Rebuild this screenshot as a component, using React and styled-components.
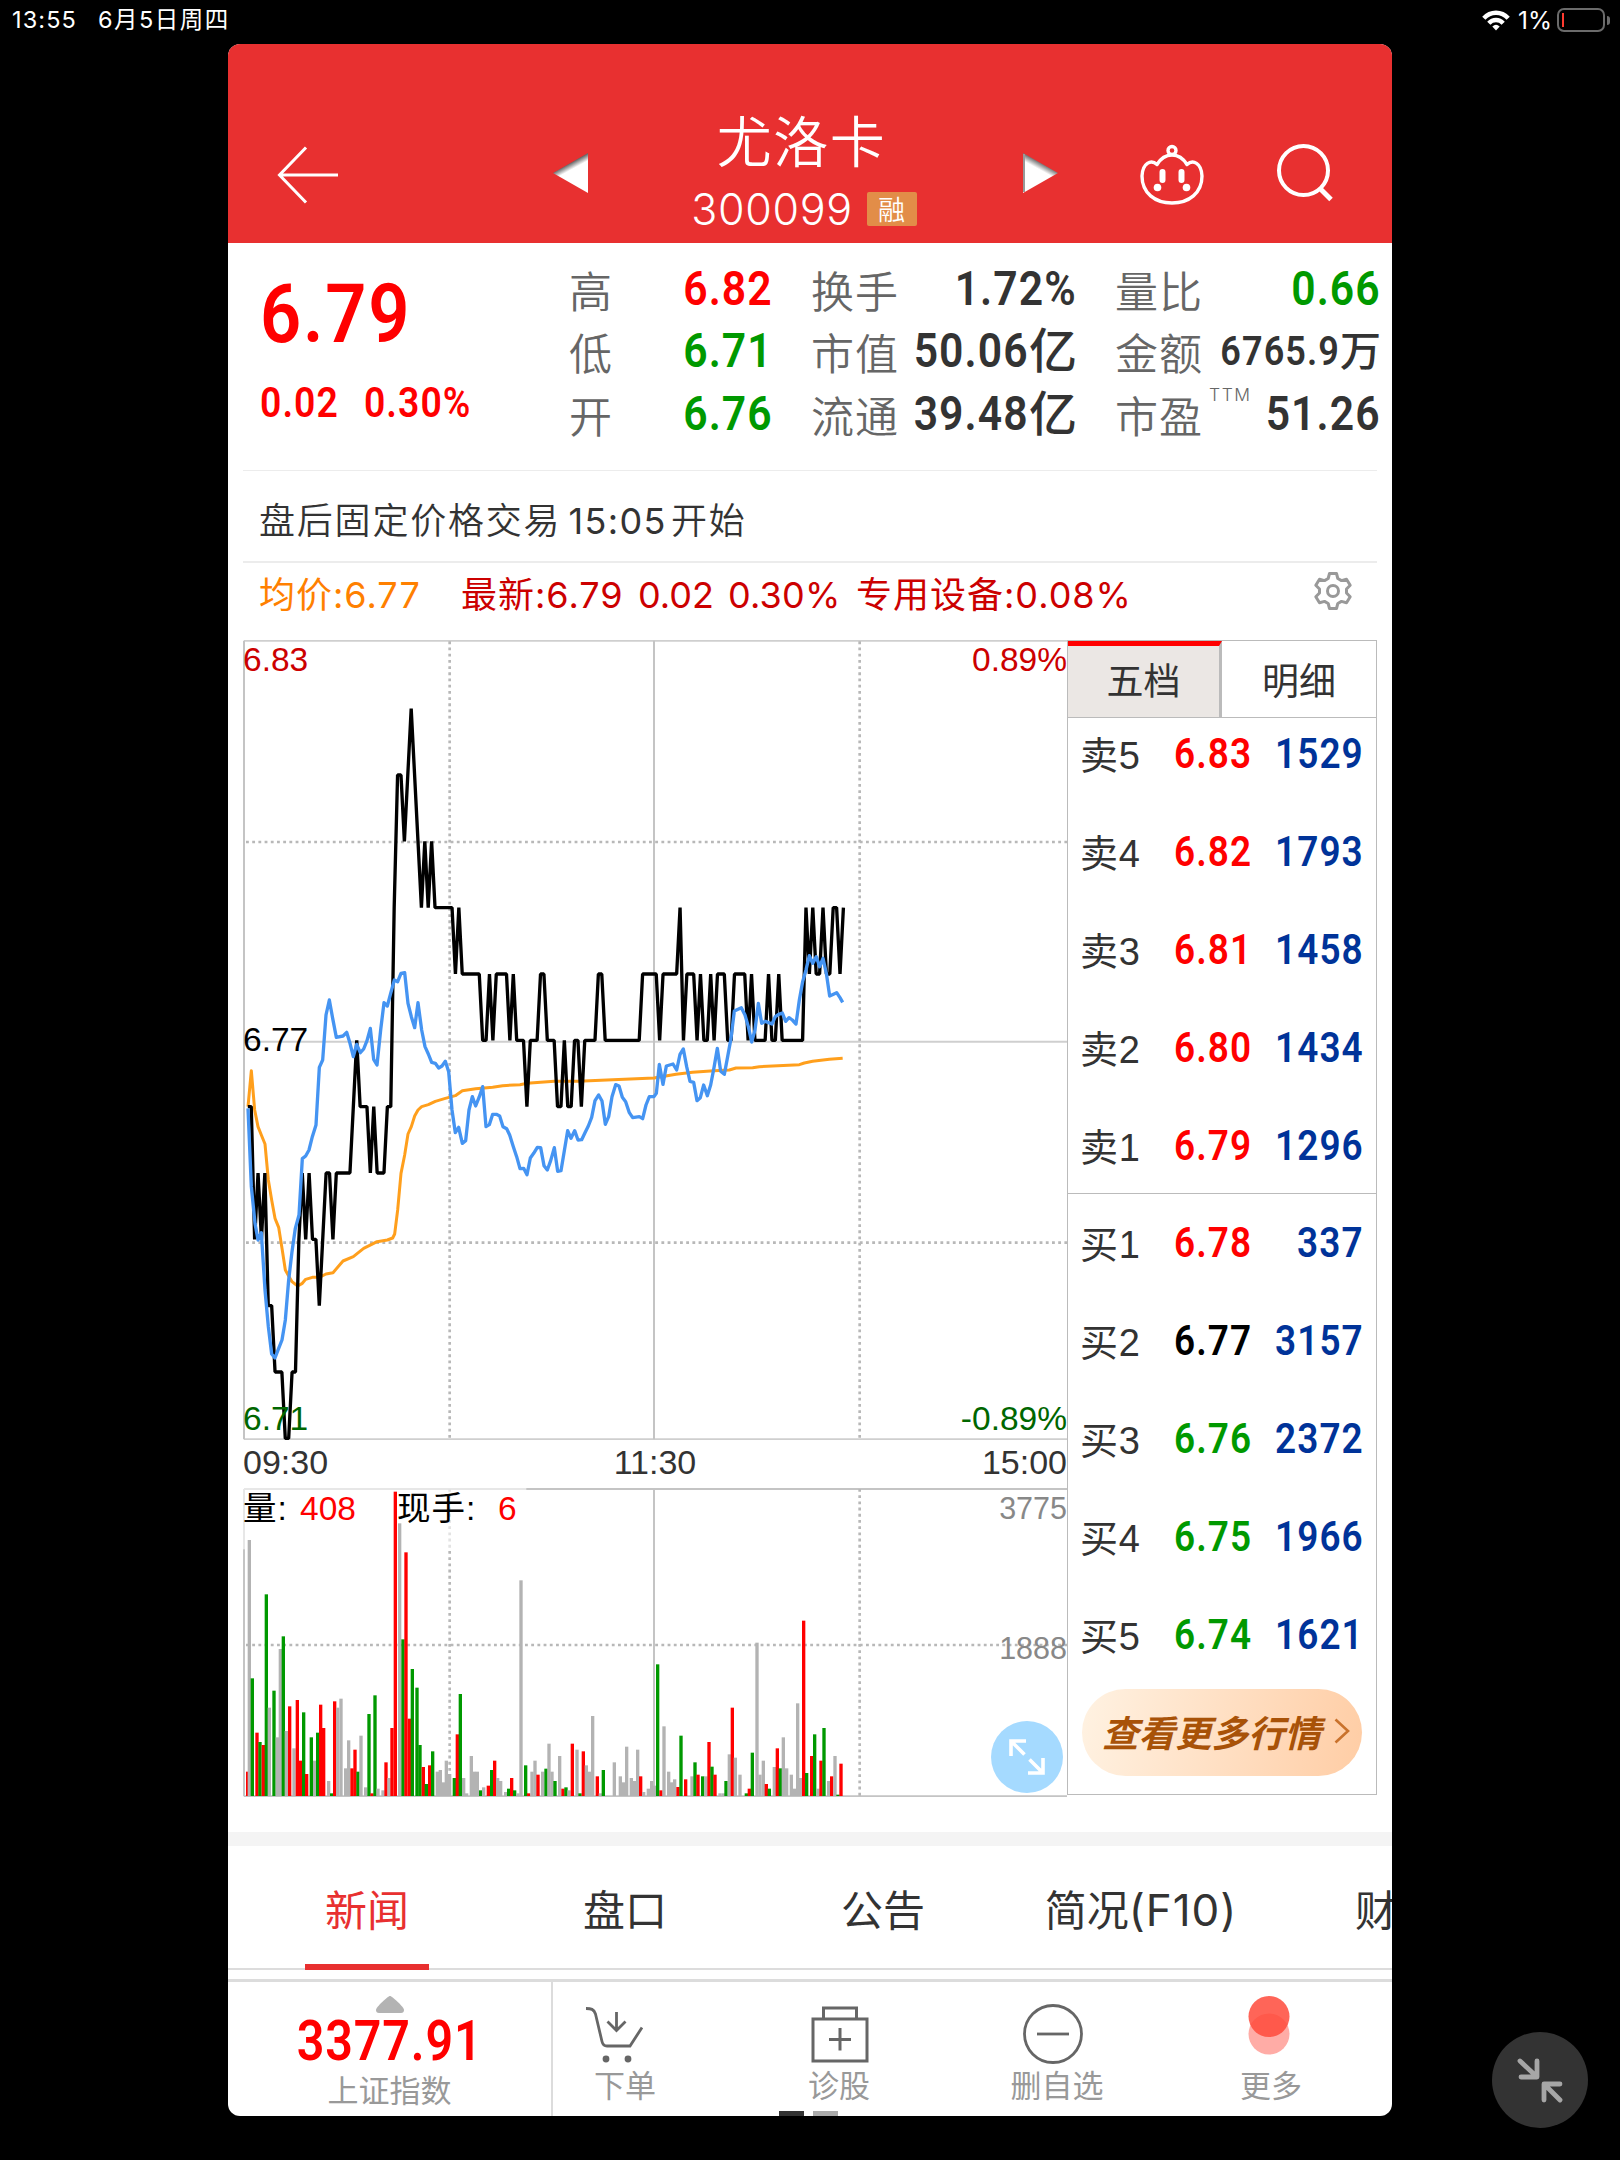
import React from 'react'
import styled, { createGlobalStyle } from 'styled-components';

const quotes = [
    [
        { label: '高', value: '6.82', color: '#ff0000' },
        { label: '低', value: '6.71', color: '#009900' },
        { label: '开', value: '6.76', color: '#009900' },
    ],
    [
        { label: '换手', value: '1.72%' },
        { label: '市值', value: '50.06', unit: '亿' },
        { label: '流通', value: '39.48', unit: '亿' },
    ],
    [
        { label: '量比', value: '0.66', color: '#009900' },
        { label: '金额', value: '6765.9', unit: '万', small: true },
        { label: '市盈', value: '51.26', sup: 'TTM' },
    ],
];

const sells = [
    ['卖5', '6.83', '1529', '#ff0000'],
    ['卖4', '6.82', '1793', '#ff0000'],
    ['卖3', '6.81', '1458', '#ff0000'],
    ['卖2', '6.80', '1434', '#ff0000'],
    ['卖1', '6.79', '1296', '#ff0000'],
];

const buys = [
    ['买1', '6.78', '337', '#ff0000'],
    ['买2', '6.77', '3157', '#000000'],
    ['买3', '6.76', '2372', '#009900'],
    ['买4', '6.75', '1966', '#009900'],
    ['买5', '6.74', '1621', '#009900'],
];

// [minute, cents below the 6.77 close]
const ticks = [
    [0, 1], [1, 1], [2, 3], [3, 2], [4, 3], [5, 2], [6, 4], [7, 4], [8, 5], [10, 5], [11, 6], [12, 6],
    [13, 5], [14, 5], [15, 3], [16, 2], [17, 3], [18, 2], [19, 3], [20, 3], [21, 4], [22, 3], [23, 2],
    [24, 2], [25, 3], [26, 2], [30, 2], [31, 1], [32, 0], [33, 1], [35, 1], [36, 2], [37, 1], [38, 2],
    [40, 2], [41, 1], [42, 1], [43, -2], [44, -4], [45, -4], [46, -3], [47, -4], [48, -5], [49, -4],
    [50, -3], [51, -2], [52, -3], [53, -2], [54, -3], [55, -2], [60, -2], [61, -1], [62, -2], [63, -1],
    [68, -1], [69, 0], [70, 0], [71, -1], [72, 0], [73, -1], [76, -1], [77, 0], [78, -1], [79, 0],
    [81, 0], [82, 1], [83, 0], [85, 0], [86, -1], [87, -1], [88, 0], [90, 0], [91, 1], [92, 1], [93, 0],
    [94, 1], [95, 1], [96, 0], [97, 0], [98, 1], [99, 0], [102, 0], [103, -1], [104, -1], [105, 0],
    [115, 0], [116, -1], [120, -1], [121, 0], [122, -1], [126, -1], [127, -2], [128, 0], [129, -1],
    [131, -1], [132, 0], [133, -1], [134, 0], [135, 0], [136, -1], [137, 0], [138, -1], [140, -1],
    [141, 0], [142, 0], [143, -1], [146, -1], [147, 0], [148, -1], [149, 0], [152, 0], [153, -1],
    [154, 0], [155, 0], [156, -1], [157, 0], [163, 0], [164, -2], [165, -1], [166, -2], [167, -1],
    [168, -1], [169, -2], [170, -1], [171, -1], [172, -2], [173, -2], [174, -1], [175, -2],
];

const indexLine = '36,1435 46,1670 57,1780 66,1830 76,1808 87,1980 97,2090 107,2172 117,2184 128,2155 138,2130 148,2070 158,1950 168,1865 178,1795 189,1755 199,1586 209,1578 219,1560 229,1520 240,1485 250,1312 260,1290 270,1155 280,1110 290,1165 301,1222 321,1218 332,1207 342,1240 352,1280 362,1243 373,1268 383,1257 393,1232 403,1195 413,1288 423,1305 434,1200 444,1118 454,1128 464,1090 475,1050 485,1055 495,1030 506,1028 516,1120 526,1160 536,1193 546,1118 557,1200 567,1250 577,1272 587,1297 598,1300 608,1314 618,1308 628,1294 638,1325 648,1440 658,1508 668,1492 679,1540 689,1532 699,1440 709,1400 719,1428 730,1400 740,1370 750,1490 760,1484 770,1453 781,1453 791,1458 801,1490 812,1496 821,1515 832,1550 842,1580 852,1616 863,1615 873,1634 883,1584 893,1570 904,1552 914,1553 924,1607 934,1620 944,1592 955,1553 965,1624 975,1622 985,1562 995,1502 1005,1525 1016,1502 1026,1530 1037,1529 1047,1508 1057,1488 1067,1462 1077,1412 1088,1395 1098,1413 1108,1483 1118,1460 1128,1400 1139,1364 1149,1368 1159,1402 1169,1415 1180,1448 1190,1463 1210,1460 1220,1466 1230,1425 1240,1400 1254,1400 1261,1390 1270,1303 1281,1363 1291,1308 1311,1302 1322,1320 1332,1273 1342,1257 1352,1310 1362,1354 1373,1357 1383,1412 1393,1403 1403,1365 1414,1397 1424,1365 1434,1313 1444,1255 1454,1324 1465,1333 1475,1280 1485,1225 1495,1143 1516,1133 1527,1155 1537,1190 1547,1236 1557,1200 1567,1120 1577,1180 1588,1174 1608,1182 1618,1160 1628,1153 1639,1149 1649,1174 1659,1163 1669,1170 1680,1182 1690,1110 1700,1055 1710,1020 1720,977 1730,1000 1741,980 1751,1010 1761,985 1771,1030 1781,1098 1802,1088 1812,1103 1820,1117';

const avgLine = '36,1430 46,1322 56,1440 66,1490 76,1515 87,1542 97,1650 107,1710 117,1765 128,1792 138,1855 148,1920 158,1938 168,1955 185,1968 199,1960 209,1948 229,1942 250,1942 270,1932 291,1928 321,1893 352,1880 383,1855 413,1840 423,1835 454,1830 470,1824 476,1812 485,1740 495,1630 506,1575 516,1512 526,1490 536,1458 546,1440 557,1430 577,1424 598,1414 628,1405 658,1397 679,1382 719,1376 770,1372 800,1367 852,1364 873,1360 955,1354 1026,1354 1130,1349 1254,1344 1320,1333 1370,1327 1434,1322 1480,1320 1500,1314 1550,1313 1570,1310 1690,1304 1705,1299 1730,1294 1780,1288 1820,1285';

// colour (r up, n down, g flat), x, top
const volumes = 'r35,905 g40,210 n49,625 r63,788 n72,816 r82,825 n91,373 g100,713 n114,662 g124,802 g133,537 n142,499 g151,783 r161,709 g174,835 r184,690 r194,872 n203,727 r212,912 n226,802 g236,872 n245,788 r254,704 r263,774 g278,933 n287,970 r296,694 g305,713 g315,686 g329,895 g338,811 r348,895 r357,839 n366,905 g375,797 g389,952 n399,732 r408,970 n417,676 g426,956 g441,961 r450,877 g459,924 r468,774 r478,65 g491,160 n501,508 r510,247 r520,746 n529,597 n543,653 n552,825 r562,891 n571,942 r581,886 n590,844 g604,905 g613,900 g622,937 g631,872 g641,912 n655,924 r664,793 n673,672 g683,924 g692,970 g706,858 g715,905 g724,905 n734,961 g743,952 r757,947 n767,900 r776,872 g785,924 g794,933 g809,966 n818,956 r827,924 n836,961 g846,970 g855,331 n869,886 r878,970 g888,905 g897,872 r906,914 g920,905 n930,896 g939,821 g948,905 n957,933 g971,858 r981,956 n990,952 g999,961 r1009,821 g1023,839 n1032,970 r1042,844 g1051,886 g1060,905 g1070,738 r1084,919 g1093,970 n1102,900 g1135,877 g1153,919 g1162,937 g1172,830 g1186,924 g1195,933 g1205,839 r1214,919 g1223,966 g1237,956 g1247,933 g1256,947 n1265,583 r1275,961 g1284,769 g1298,905 g1307,937 g1316,928 r1326,951 n1335,797 r1349,928 g1368,919 n1377,877 r1386,914 n1400,919 g1410,919 r1419,816 n1428,890 r1437,914 g1452,970 g1462,970 n1470,933 g1480,853 r1489,713 g1498,863 g1512,914 n1531,970 r1540,956 n1549,848 g1563,518 g1572,914 g1582,872 r1591,942 n1600,956 g1615,891 r1624,835 n1633,895 g1642,802 g1652,895 g1666,914 g1675,956 g1685,700 g1694,924 r1703,452 n1712,909 r1727,858 n1736,793 g1746,956 r1755,872 n1764,774 g1778,933 r1787,919 g1797,858 n1806,974 r1815,881'
    .split(' ')
    .map((v) => {
        const [x, top] = v.slice(1).split(',').map(Number);
        return { fill: { r: '#ff0000', n: '#009900', g: '#b3b3b3' }[v[0]], x, top };
    });

const PriceChart = () => (
    <ChartSvg $h={800} viewBox="21 30 2475 2400">
        <g stroke="#c4c4c4" strokeWidth="6" fill="none">
            <path d="M24 32H2493M24 1235H2493M24 2428H2493" stroke="#cfcfcf" />
            <path d="M24 32V2428M1254 32V2428" />
            <path d="M30 636H2493M30 1838H2493M641 34V2428M1871 34V2428" strokeWidth="8" strokeDasharray="8.5 10.1" stroke="#b8b8b8" />
        </g>
        <g fill="none" strokeLinejoin="round">
            <polyline points={avgLine} stroke="#ff9f1c" strokeWidth="9" />
            <polyline points={ticks.map(([m, k]) => `${35.5 + m * 10.21},${1231 + k * 199}`).join(' ')} stroke="#000" strokeWidth="10" strokeLinejoin="bevel" />
            <polyline points={indexLine} stroke="#4594f2" strokeWidth="10" />
        </g>
    </ChartSvg>
)

const VolumeChart = () => (
    <ChartSvg $h={309} viewBox="21 54 2475 927">
        <g stroke="#c4c4c4" strokeWidth="6" fill="none">
            <path d="M24 57H2493M24 979H2493M24 57V979M1254 57V984" />
            <path d="M30 525H2493M641 57V979M1871 57V979" strokeWidth="8" strokeDasharray="8.5 10.1" stroke="#b8b8b8" />
        </g>
        <rect x="21" y="54" width="850" height="184" fill="#fff" opacity="0.6" />
        {volumes.map((v) => (
            <rect key={v.x} x={v.x - 5} y={v.top} width="10" height={978 - v.top} fill={v.fill} />
        ))}
    </ChartSvg>
)

const App = () => {
  return (
    <Screen>
      <GlobalStyle />
      <StatusBar>
        <StatusText>13:55</StatusText>
        <StatusText $left={21} $gap={1.5}>6月5日周四</StatusText>
        <StatusRight>
            <svg width="28" height="21" viewBox="0 0 28 21" fill="none" stroke="#fff" strokeWidth="4.4">
                <path d="M1.8 8.2C8.5 1 19.5 1 26.2 8.2" />
                <path d="M6.8 13.2C10.8 9 17.2 9 21.2 13.2" />
                <path d="M14 20.5L10.3 16.5Q14 13.2 17.7 16.5Z" fill="#fff" stroke="none" />
            </svg>
            <Percent>1%</Percent>
            <Battery><Charge /></Battery>
            <Nub />
        </StatusRight>
      </StatusBar>

      <Phone>
        <Header>
            <BackIcon viewBox="0 0 60 58" fill="none" stroke="#fff" strokeWidth="3">
                <path d="M60 29H2M28 1.5L1.5 29L28 56.5" />
            </BackIcon>
            <Triangle viewBox="0 0 36 40" $left={215}>
                <defs>
                    <linearGradient id="tl" gradientUnits="userSpaceOnUse" x1="17.5" y1="10" x2="20.5" y2="15.5">
                        <stop offset="0" stopColor="#666" />
                        <stop offset="1" stopColor="#fff" />
                    </linearGradient>
                </defs>
                <path d="M35 0V40L0 20Z" fill="url(#tl)" />
            </Triangle>
            <TitleBlock>
                <Title>尤洛卡</Title>
                <Code>300099<Badge>融</Badge></Code>
            </TitleBlock>
            <Triangle viewBox="0 0 36 40">
                <defs>
                    <linearGradient id="tr" gradientUnits="userSpaceOnUse" x1="17.5" y1="10" x2="14.5" y2="15.5">
                        <stop offset="0" stopColor="#777" />
                        <stop offset="1" stopColor="#fff" />
                    </linearGradient>
                </defs>
                <path d="M0 0V40L35 20Z" fill="url(#tr)" />
                <path d="M1 1V39" stroke="#999" strokeWidth="2" />
            </Triangle>
            <PigIcon viewBox="0 0 64 60" fill="none" stroke="#fff" strokeWidth="3.4">
                <circle cx="32" cy="5.5" r="4" />
                <path d="M17 19.5C21 13 26 10 32 10S43 13 47 19.5C53 14 61.5 18 62 31C62 48 49 58 32 58S2 48 2 31C2.5 18 11 14 17 19.5Z" strokeLinejoin="round" />
                <path d="M22.5 27V35M41.5 27V35" strokeWidth="6" strokeLinecap="round" />
                <circle cx="17.5" cy="42.5" r="3.8" fill="#fff" stroke="none" />
                <circle cx="46.5" cy="42.5" r="3.8" fill="#fff" stroke="none" />
            </PigIcon>
            <SearchIcon viewBox="0 0 57 58" fill="none" stroke="#fff" strokeWidth="4">
                <circle cx="26.5" cy="26.5" r="24.5" />
                <path d="M42.5 44L54 55.5" strokeWidth="5" />
            </SearchIcon>
        </Header>

        <Summary>
            <Current>
                <Price>6.79</Price>
                <Change><span>0.02</span><span>0.30%</span></Change>
            </Current>
            {quotes.map((group, index) => (
                <Group key={index} $i={index}>
                    {group.map((q) => (
                        <Quote key={q.label}>
                            <QuoteLabel>{q.label}</QuoteLabel>
                            {q.sup ? <Sup>{q.sup}</Sup> : null}
                            <QuoteValue $color={q.color}>
                                <Num $size={q.small ? 41 : 48.5}>{q.value}</Num>
                                {q.unit ? <Unit $size={q.small ? 41 : 48}>{q.unit}</Unit> : null}
                            </QuoteValue>
                        </Quote>
                    ))}
                </Group>
            ))}
        </Summary>

        <Notice>盘后固定价格交易<NoticeTime>15:05</NoticeTime>开始</Notice>

        <Legend>
            <LegendItem $w={202} $color="#ff8000">均价:6.77</LegendItem>
            <LegendItem $w={177}>最新:6.79</LegendItem>
            <LegendItem $w={90} $gap={0}>0.02</LegendItem>
            <LegendItem $w={128} $gap={0.2}>0.30%</LegendItem>
            <LegendItem>专用设备:0.08%</LegendItem>
            <GearIcon viewBox="0 0 38 38" fill="none" stroke="#999" strokeWidth="3" strokeLinejoin="round">
                <path d="M15.5 1.5H22.5L23.8 6.5L27.5 8.6L32.5 7.2L36.2 13.3L32.5 17V21L36.2 24.7L32.5 30.8L27.5 29.4L23.8 31.5L22.5 36.5H15.5L14.2 31.5L10.5 29.4L5.5 30.8L1.8 24.7L5.5 21V17L1.8 13.3L5.5 7.2L10.5 8.6L14.2 6.5Z" />
                <circle cx="19" cy="19" r="5.5" />
            </GearIcon>
        </Legend>

        <Market>
            <Charts>
                <ChartBox $h={800}>
                    <PriceChart />
                    <AxisText $top={0} $color="#cc0000">6.83</AxisText>
                    <AxisText $top={0} $right $color="#cc0000">0.89%</AxisText>
                    <AxisText $top={380} $color="#000">6.77</AxisText>
                    <AxisText $top={759} $color="#006600">6.71</AxisText>
                    <AxisText $top={759} $right $color="#006600">-0.89%</AxisText>
                </ChartBox>
                <Times><span>09:30</span><span>11:30</span><span>15:00</span></Times>
                <ChartBox $h={309}>
                    <VolumeChart />
                    <VolumeText>
                        <VolumeItem $w={57}>量:</VolumeItem>
                        <VolumeItem $w={97} $red>408</VolumeItem>
                        <VolumeItem $w={101}>现手:</VolumeItem>
                        <VolumeItem $red>6</VolumeItem>
                    </VolumeText>
                    <Scale $top={0}>3775</Scale>
                    <Scale $top={140}>1888</Scale>
                    <Expand>
                        <svg width="36" height="36" viewBox="0 0 36 36" fill="none" stroke="#fff" strokeWidth="3.6">
                            <path d="M2 17V2H17M2.5 2.5L15.5 15.5M34 19V34H19M33.5 33.5L20.5 20.5" />
                        </svg>
                    </Expand>
                </ChartBox>
            </Charts>

            <Book>
                <BookTabs>
                    <BookTab $active>五档</BookTab>
                    <BookTab>明细</BookTab>
                </BookTabs>
                <BookSide $sell>
                    {sells.map(([name, price, vol, color]) => (
                        <BookRow key={name}>
                            <BookName>{name}</BookName>
                            <BookNum $color={color}>{price}</BookNum>
                            <BookNum $right $color="#003399">{vol}</BookNum>
                        </BookRow>
                    ))}
                </BookSide>
                <BookSide>
                    {buys.map(([name, price, vol, color]) => (
                        <BookRow key={name}>
                            <BookName>{name}</BookName>
                            <BookNum $color={color}>{price}</BookNum>
                            <BookNum $right $color="#003399">{vol}</BookNum>
                        </BookRow>
                    ))}
                </BookSide>
                <MoreButton>
                    查看更多行情
                    <svg width="16" height="26" viewBox="0 0 16 26" fill="none" stroke="#c9722c" strokeWidth="2.6">
                        <path d="M1.5 1.5L14 13L1.5 24.5" />
                    </svg>
                </MoreButton>
            </Book>
        </Market>

        <Tabs>
            <Tab $left={77} $w={124} $active>新闻</Tab>
            <Tab $left={134} $w={124}>盘口</Tab>
            <Tab $left={134} $w={124}>公告</Tab>
            <Tab $left={84} $w={224}>简况<Latin>(F10)</Latin></Tab>
            <Tab $left={102} $w={84}>财务</Tab>
        </Tabs>

        <BottomBar>
            <IndexCell>
                <svg width="28" height="17" viewBox="0 0 28 17">
                    <path d="M14 0C16 0 28 11 28 14Q28 17 25 17H3Q0 17 0 14C0 11 12 0 14 0Z" fill="#b3b3b3" />
                </svg>
                <IndexValue>3377.91</IndexValue>
                <IndexName>上证指数</IndexName>
            </IndexCell>
            <Action $left={1} $w={142}>
                <ActionIcon $shift={-20} viewBox="0 0 60 60" fill="none" stroke="#666" strokeWidth="2.8">
                    <path d="M1 4.5C6 4.5 9 5 10.5 10L17 37.5Q18 42 22 42H45L57 23.5M31.5 8V25M22.5 17.5L31.5 26.5L40.5 17.5" />
                    <circle cx="21" cy="55" r="3.4" fill="#666" stroke="none" />
                    <circle cx="43" cy="55" r="3.4" fill="#666" stroke="none" />
                </ActionIcon>
                下单
            </Action>
            <Action $left={73} $w={140}>
                <ActionIcon $shift={2} viewBox="0 0 60 60" fill="none" stroke="#666" strokeWidth="3">
                    <path d="M3 15H57V57H3ZM13.5 15V4H46.5V15M30 24V46.5M19 35.5H41" />
                </ActionIcon>
                诊股
            </Action>
            <Action $left={75} $w={146}>
                <ActionIcon $shift={-8} viewBox="0 0 60 60" fill="none" stroke="#666" strokeWidth="2.8">
                    <circle cx="30" cy="30" r="28.5" />
                    <path d="M14 30H46" />
                </ActionIcon>
                删自选
            </Action>
            <Action $left={71} $w={140}>
                <ActionIcon $shift={-5} viewBox="0 0 60 60">
                    <circle cx="30" cy="30" r="20.5" fill="#ff5a4d" opacity="0.5" />
                    <circle cx="30" cy="12.5" r="20.5" fill="#ff4a3b" opacity="0.85" />
                </ActionIcon>
                更多
            </Action>
            <Pager><Dot $color="#333" /><Dot $color="#aaa" /></Pager>
        </BottomBar>
      </Phone>

      <Collapse>
        <svg width="46" height="48" viewBox="1 0 46 48" fill="none" stroke="#a6a6a6" strokeWidth="4.8" strokeLinecap="round" strokeLinejoin="round">
            <path d="M4 5L20 20M21 5V21H5M44 44L29 29M28 44V28H44" />
        </svg>
      </Collapse>
    </Screen>
  )
}

export default App

const GlobalStyle = createGlobalStyle`
    * { box-sizing: border-box; }
    body {
        margin: 0;
        background: #000;
        font-family: Inter, "Noto Sans CJK SC", sans-serif;
    }
    svg { display: block; flex: none; overflow: visible; }
`;

const Screen = styled.div`
    position: relative;
    width: 1620px;
    height: 2160px;
    background: #000;
    overflow: hidden;
`;

const StatusBar = styled.div`
    display: flex;
    align-items: center;
    height: 44px;
    padding: 0 10px 4px 12px;
    color: #fff;
`;

const StatusText = styled.span`
    font-size: 23.5px;
    line-height: 30px;
    letter-spacing: ${(p) => p.$gap || 1.1}px;
    margin-left: ${(p) => p.$left || 0}px;
`;

const StatusRight = styled.div`
    display: flex;
    align-items: center;
    margin-left: auto;
`;

const Percent = styled.span`
    font-size: 24.5px;
    line-height: 30px;
    margin: 0 5px 0 8px;
`;

const Battery = styled.div`
    width: 48px;
    height: 24px;
    border: 2px solid #6b6b6b;
    border-radius: 7px;
    padding: 3px;
`;

const Charge = styled.div`
    width: 2px;
    height: 14px;
    background: #ff3b30;
`;

const Nub = styled.div`
    width: 3px;
    height: 9px;
    margin-left: 2px;
    border-radius: 0 3px 3px 0;
    background: #6b6b6b;
`;

const Phone = styled.div`
    display: flex;
    flex-direction: column;
    width: 1164px;
    height: 2072px;
    margin-left: 228px;
    border-radius: 12px;
    background: #fff;
    overflow: hidden;
`;

const Header = styled.div`
    display: flex;
    align-items: center;
    flex: none;
    height: 199px;
    padding: 59px 0 0 50px;
    background: #e83030;
    color: #fff;
`;

const BackIcon = styled.svg`
    width: 60px;
    height: 58px;
    margin-top: 3px;
`;

const Triangle = styled.svg`
    width: 36px;
    height: 40px;
    margin-left: ${(p) => p.$left || 0}px;
`;

const TitleBlock = styled.div`
    align-self: flex-start;
    width: 434px;
    padding-top: 9px;
`;

const Title = styled.div`
    font-size: 55px;
    line-height: 60px;
    letter-spacing: 1.5px;
    font-weight: 350;
    text-align: center;
    padding-right: 9px;
`;

const Code = styled.div`
    display: flex;
    align-items: center;
    justify-content: center;
    margin-top: 12px;
    padding-right: 4px;
    font-size: 43px;
    line-height: 50px;
    font-weight: 350;
    letter-spacing: 0.7px;
`;

const Badge = styled.span`
    width: 50px;
    height: 34px;
    margin-left: 14px;
    border-radius: 2px;
    background: #e28d48;
    font-size: 27px;
    line-height: 37px;
    text-align: center;
`;

const PigIcon = styled.svg`
    width: 64px;
    height: 60px;
    margin: 3px 0 0 81px;
`;

const SearchIcon = styled.svg`
    width: 57px;
    height: 58px;
    margin-left: 73px;
`;

const Summary = styled.div`
    display: flex;
    height: 228px;
    margin: 0 15px;
    padding-top: 15px;
    border-bottom: 1px solid #ececec;
`;

const Current = styled.div`
    flex: none;
    width: 326px;
    padding: 16px 0 0 17px;
    color: #ff0000;
    font-family: Roboto, sans-serif;
    font-weight: 600;
`;

const Price = styled.div`
    font-size: 82px;
    line-height: 80px;
    letter-spacing: 2px;
    transform: scaleX(0.88);
    transform-origin: left;
`;

const Change = styled.div`
    display: flex;
    gap: 28px;
    margin-top: 24px;
    font-size: 42px;
    line-height: 50px;
    letter-spacing: 1.2px;
    transform: scaleX(0.89);
    transform-origin: left;
`;

const Group = styled.div`
    flex: none;
    width: ${(p) => [204, 266, 266][p.$i]}px;
    margin-right: ${(p) => [38, 38, 0][p.$i]}px;
`;

const Quote = styled.div`
    display: flex;
    align-items: center;
    height: 62.3px;
`;

const QuoteLabel = styled.span`
    flex: none;
    padding-top: 6px;
    font-size: 43px;
    line-height: 58px;
    font-weight: 350;
    letter-spacing: 1px;
    color: #666;
`;

const Sup = styled.span`
    align-self: flex-start;
    width: 0;
    font-size: 17.5px;
    line-height: 20px;
    padding: 2px 0 0 6px;
    letter-spacing: 1.5px;
    font-weight: 350;
    color: #666;
`;

const QuoteValue = styled.div`
    display: flex;
    flex: 1;
    min-width: 0;
    align-items: center;
    justify-content: flex-end;
    color: ${(p) => p.$color || '#333'};
`;

const Num = styled.span`
    font-family: Roboto, sans-serif;
    font-weight: 600;
    font-size: ${(p) => p.$size}px;
    line-height: 56px;
    letter-spacing: 1.2px;
    transform: scaleX(0.88);
    transform-origin: right;
`;

const Unit = styled.span`
    font-size: ${(p) => p.$size}px;
    line-height: 56px;
    font-weight: 500;
`;

const Notice = styled.div`
    height: 92px;
    margin: 0 15px;
    padding: 0 16px;
    border-bottom: 2px solid #ececec;
    font-size: 36px;
    line-height: 101px;
    letter-spacing: 1.8px;
    font-weight: 350;
    color: #333;
`;

const NoticeTime = styled.span`
    margin: 0 4px 0 7px;
    letter-spacing: 1.4px;
    font-weight: 400;
`;

const Legend = styled.div`
    display: flex;
    align-items: center;
    height: 63px;
    padding: 1px 40px 0 31px;
    font-size: 36px;
    line-height: 50px;
`;

const LegendItem = styled.span`
    flex: none;
    width: ${(p) => (p.$w ? p.$w + 'px' : 'auto')};
    letter-spacing: ${(p) => (p.$gap === undefined ? 1 : p.$gap)}px;
    white-space: nowrap;
    color: ${(p) => p.$color || '#cc0000'};
`;

const GearIcon = styled.svg`
    width: 38px;
    height: 38px;
    margin: 0 0 8px auto;
`;

const Market = styled.div`
    display: flex;
    align-items: flex-start;
    height: 1206px;
    padding: 14px 15px 0;
`;

const Charts = styled.div`
    width: 824px;
    font-family: "Liberation Sans", "Noto Sans CJK SC", sans-serif;
`;

const ChartBox = styled.div`
    position: relative;
    height: ${(p) => p.$h}px;
    overflow: hidden;
`;

const ChartSvg = styled.svg`
    width: 825px;
    height: ${(p) => p.$h}px;
`;

const AxisText = styled.span`
    position: absolute;
    top: ${(p) => p.$top}px;
    ${(p) => (p.$right ? 'right: 0;' : 'left: 0;')}
    font-size: 33.5px;
    line-height: 40px;
    color: ${(p) => p.$color};
`;

const Times = styled.div`
    display: flex;
    justify-content: space-between;
    height: 48px;
    font-size: 34px;
    line-height: 45px;
    color: #333;
`;

const VolumeText = styled.div`
    position: absolute;
    top: 0;
    left: 0;
    display: flex;
`;

const VolumeItem = styled.span`
    width: ${(p) => (p.$w ? p.$w + 'px' : 'auto')};
    font-size: 33.5px;
    line-height: 42px;
    white-space: nowrap;
    letter-spacing: ${(p) => (p.$red ? 0 : 1)}px;
    color: ${(p) => (p.$red ? '#ff0000' : '#000')};
`;

const Scale = styled.span`
    position: absolute;
    top: ${(p) => p.$top}px;
    right: 0;
    font-size: 30.5px;
    line-height: 40px;
    color: #888;
`;

const Expand = styled.div`
    position: absolute;
    right: 4px;
    bottom: 4px;
    display: flex;
    align-items: center;
    justify-content: center;
    width: 72px;
    height: 72px;
    border-radius: 50%;
    background: #a5daff;
`;

const Book = styled.div`
    width: 310px;
    height: 1155px;
    border: 1.5px solid #bbb;
`;

const BookTabs = styled.div`
    display: flex;
    height: 77px;
    border-bottom: 1px solid #bbb;
`;

const BookTab = styled.div`
    width: ${(p) => (p.$active ? 154 : 154)}px;
    border-top: 5px solid ${(p) => (p.$active ? '#ff0000' : '#fff')};
    border-right: ${(p) => (p.$active ? '3px solid #bbb' : 'none')};
    background: ${(p) => (p.$active ? '#ebe7e4' : '#fff')};
    font-size: 37px;
    line-height: 71px;
    text-align: center;
    color: #333;
`;

const BookSide = styled.div`
    border-bottom: ${(p) => (p.$sell ? '1px solid #bbb' : 'none')};
    padding-top: ${(p) => (p.$sell ? 0 : 13)}px;
    height: ${(p) => (p.$sell ? 476 : 496)}px;
    overflow: hidden;
`;

const BookRow = styled.div`
    display: flex;
    align-items: center;
    height: 76px;
    margin-bottom: 22px;
    padding: 0 12px 0 12px;
`;

const BookName = styled.span`
    width: 94px;
    font-family: "Liberation Sans", "Noto Sans CJK SC", sans-serif;
    font-size: 38px;
    line-height: 60px;
    letter-spacing: 0.8px;
    white-space: nowrap;
    color: #333;
`;

const BookNum = styled.span`
    margin-left: ${(p) => (p.$right ? 'auto' : 0)};
    padding-bottom: 4px;
    font-family: Roboto, sans-serif;
    font-weight: 600;
    font-size: 42px;
    line-height: 60px;
    letter-spacing: 1.2px;
    color: ${(p) => p.$color};
    transform: scaleX(0.88);
    transform-origin: ${(p) => (p.$right ? 'right' : 'left')};
`;

const MoreButton = styled.div`
    display: flex;
    align-items: center;
    justify-content: space-between;
    width: 280px;
    height: 87px;
    margin: -1px 0 0 14px;
    padding: 0 12px 3px 20px;
    border-radius: 44px;
    background: linear-gradient(100deg, #fff2e2, #ffcda5);
    font-size: 36.5px;
    font-style: italic;
    font-weight: 700;
    color: #a85208;
`;

const Tabs = styled.div`
    display: flex;
    flex: none;
    height: 138px;
    border-top: 14px solid #f4f4f4;
    box-shadow: inset 0 -2px #dcdcdc;
    overflow: hidden;
`;

const Tab = styled.div`
    flex: none;
    width: ${(p) => p.$w}px;
    height: 124px;
    margin-left: ${(p) => p.$left}px;
    border-bottom: 6px solid ${(p) => (p.$active ? '#e83030' : 'transparent')};
    font-size: 42px;
    line-height: 129px;
    text-align: center;
    white-space: nowrap;
    color: ${(p) => (p.$active ? '#e83030' : '#333')};
`;

const Latin = styled.span`
    font-size: 44px;
    letter-spacing: 1px;
`;

const BottomBar = styled.div`
    position: relative;
    display: flex;
    flex: none;
    height: 137px;
    margin-top: 9px;
    border-top: 3px solid #dcdcdc;
`;

const IndexCell = styled.div`
    display: flex;
    flex-direction: column;
    align-items: center;
    width: 325px;
    padding-top: 14px;
    border-right: 2px solid #dcdcdc;
`;

const IndexValue = styled.div`
    font-family: Roboto, sans-serif;
    font-weight: 600;
    font-size: 55px;
    line-height: 56px;
    letter-spacing: 1px;
    color: #ff0000;
    transform: scaleX(0.88);
`;

const IndexName = styled.div`
    margin-top: 2px;
    font-size: 31px;
    line-height: 40px;
    color: #999;
`;

const Action = styled.div`
    display: flex;
    flex-direction: column;
    align-items: center;
    width: ${(p) => p.$w}px;
    margin-left: ${(p) => p.$left}px;
    padding-top: 22px;
    font-size: 31px;
    line-height: 40px;
    white-space: nowrap;
    color: #999;
`;

const ActionIcon = styled.svg`
    width: 60px;
    height: 60px;
    margin: 0 0 2px ${(p) => p.$shift || 0}px;
`;

const Pager = styled.div`
    position: absolute;
    left: 551px;
    bottom: 0;
    display: flex;
    gap: 9px;
`;

const Dot = styled.div`
    width: 25px;
    height: 5px;
    background: ${(p) => p.$color};
`;

const Collapse = styled.div`
    position: absolute;
    left: 1492px;
    top: 2032px;
    display: flex;
    align-items: center;
    justify-content: center;
    width: 96px;
    height: 96px;
    border-radius: 50%;
    background: #333;
`;
